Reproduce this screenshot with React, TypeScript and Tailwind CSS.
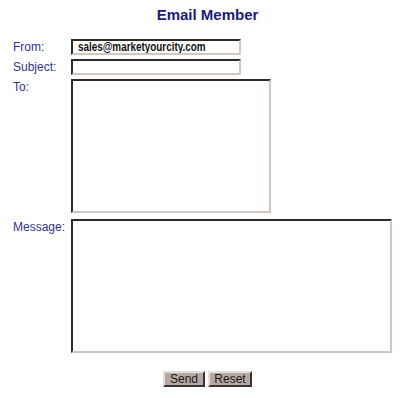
import React from "react";

const inset =
  "border-2 border-t-[#2e2a28] border-l-[#2e2a28] border-b-[#cfc7c0] border-r-[#cfc7c0] bg-white outline-none";
const btn =
  "h-[16px] border-2 border-t-[#e6dedb] border-l-[#e6dedb] border-b-[#3a3431] border-r-[#3a3431] bg-[#b6a9a3] text-[12px] leading-[12px] text-[#1a1a1a] font-['Liberation_Sans',Arial,sans-serif]";

function Row({ label, children }: { label: string; children: React.ReactNode }) {
  return (
    <div className="flex items-start">
      <label className="w-[58px] shrink-0 pt-[1px] text-[12px] leading-[15px] text-[#333399]">{label}</label>
      {children}
    </div>
  );
}

export default function App() {
  return (
    <div className="w-[400px] h-[398px] bg-white font-['Liberation_Sans',Arial,sans-serif]">
      <h1 className="pt-[6px] pl-[15px] text-center text-[15px] leading-[18px] font-bold text-[#1a1a80]">
        Email Member
      </h1>
      <form className="mt-[15px] pl-[13px] flex flex-col" onSubmit={(e) => e.preventDefault()}>
        <Row label="From:">
          <div className={`${inset} w-[170px] h-[16px] pl-[5px] flex items-center overflow-hidden`}>
            <span className="inline-block origin-left scale-x-[0.76] whitespace-nowrap text-[13px] leading-[12px] font-bold text-[#111]">
              sales@marketyourcity.com
            </span>
          </div>
        </Row>
        <div className="mt-[4px]">
          <Row label="Subject:">
            <input className={`${inset} w-[170px] h-[16px] px-1 text-[12px]`} />
          </Row>
        </div>
        <div className="mt-[4px]">
          <Row label="To:">
            <textarea className={`${inset} w-[200px] h-[134px] resize-none`} />
          </Row>
        </div>
        <div className="mt-[6px]">
          <Row label="Message:">
            <textarea className={`${inset} w-[321px] h-[134px] resize-none`} />
          </Row>
        </div>
      </form>
      <div className="mt-[18px] pl-[15px] flex justify-center gap-[3px]">
        <button type="button" className={`${btn} w-[42px]`}>Send</button>
        <button type="button" className={`${btn} w-[44px]`}>Reset</button>
      </div>
    </div>
  );
}
